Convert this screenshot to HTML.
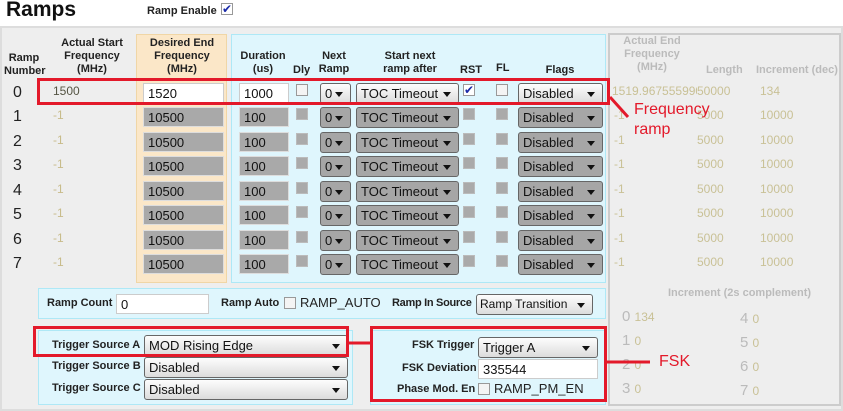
<!DOCTYPE html>
<html><head><meta charset="utf-8"><style>
*{box-sizing:border-box}
body{margin:0;width:843px;height:411px;background:#fff;font-family:"Liberation Sans",sans-serif;position:relative;overflow:hidden}
div,span{position:absolute}
.b{font-weight:bold;font-size:11px;color:#222;text-align:center;line-height:13px}
.in{height:20px;border:1px solid #ccc;background:#fff;font-size:13px;padding:2px 4px;line-height:15px;color:#111}
.g{background:#a9a9a9;border-color:#ddd}
.cb{width:12px;height:12px;border:1px solid #999;background:#f4f4f4}
.cbg{background:#aaa;border-color:#bbb}
.sel{height:21px;border:1px solid #666;border-radius:3px;background:linear-gradient(#fdfdfd,#dcdcdc);font-size:13px;padding:2px 4px;line-height:15px;color:#111;white-space:nowrap;overflow:hidden}
.sel.gs{background:#a6a6a6}
.sel:after{content:"";position:absolute;right:7px;top:8px;border-left:4px solid transparent;border-right:4px solid transparent;border-top:5px solid #111}
.n{font-size:16px;color:#222}
.m{font-size:12px;color:#c8bb8a}
.k{font-size:12px;color:#c9c196}
.red{border:3px solid #e3192a}
.rt{color:#e3192a;font-size:16px}
</style></head><body>
<div style="left:6px;top:-2px;font-size:21px;font-weight:bold;color:#111">Ramps</div>
<div class="b" style="left:147px;top:5px">Ramp Enable</div>
<div class="cb" style="left:221px;top:3px;background:#fff;color:#1a2aa8;font-size:12px;line-height:10px;text-align:center">✔</div>

<div style="left:0;top:26px;width:843px;height:385px;background:#eee;border:2px solid #ddd"></div>
<div style="left:608px;top:33px;width:233px;height:373px;border:2px solid #ccc;background:#eee"></div>
<div style="left:136px;top:34px;width:91px;height:249px;background:#fbe7c8;border:1px solid #f0d6a6"></div>
<div style="left:231px;top:34px;width:375px;height:249px;background:#dff6fd;border:1px solid #aee8f6"></div>

<div class="b" style="left:4px;top:52px;width:40px">Ramp<br>Number</div>
<div class="b" style="left:52px;top:37px;width:80px">Actual Start<br>Frequency<br>(MHz)</div>
<div class="b" style="left:138px;top:37px;width:88px">Desired End<br>Frequency<br>(MHz)</div>
<div class="b" style="left:237px;top:50px;width:52px">Duration<br>(us)</div>
<div class="b" style="left:293px;top:64px">Dly</div>
<div class="b" style="left:316px;top:50px;width:36px">Next<br>Ramp</div>
<div class="b" style="left:370px;top:50px;width:80px">Start next<br>ramp after</div>
<div class="b" style="left:460px;top:64px">RST</div>
<div class="b" style="left:496px;top:62px">FL</div>
<div class="b" style="left:540px;top:64px;width:40px">Flags</div>
<div class="b" style="left:614px;top:35px;width:76px;color:#bbb">Actual End<br>Frequency<br>(MHz)</div>
<div class="b" style="left:706px;top:64px;color:#bbb">Length</div>
<div class="b" style="left:756px;top:64px;color:#bbb">Increment (dec)</div>

<!-- row 0 -->
<div class="n" style="left:13px;top:84px">0</div><div class="m" style="left:53px;top:84px;color:#554">1500</div>
<div class="in" style="left:143px;top:83px;width:81px">1520</div>
<div class="in" style="left:239px;top:83px;width:50px">1000</div>
<div class="cb" style="left:296px;top:84px"></div>
<div class="sel" style="left:320px;top:83px;width:31px">0</div>
<div class="sel" style="left:356px;top:83px;width:103px">TOC Timeout</div>
<div class="cb" style="left:463px;top:84px;background:#fff;color:#1a2aa8;font-size:12px;line-height:10px;text-align:center">✔</div>
<div class="cb" style="left:496px;top:84px"></div>
<div class="sel" style="left:518px;top:83px;width:85px">Disabled</div>
<div class="k" style="left:612px;top:84px;width:85px;overflow:hidden;white-space:nowrap">1519.967555990</div>
<div class="k" style="left:697px;top:84px">50000</div><div class="k" style="left:760px;top:84px">134</div>

<!-- rows 1-7 -->
<div class="n" style="left:13px;top:108px">1</div><div class="m" style="left:53px;top:108px">-1</div><div class="in g" style="left:143px;top:107px;width:81px">10500</div><div class="in g" style="left:239px;top:107px;width:50px">100</div><div class="cb cbg" style="left:296px;top:108px"></div><div class="sel gs" style="left:320px;top:107px;width:31px">0</div><div class="sel gs" style="left:356px;top:107px;width:103px">TOC Timeout</div><div class="cb cbg" style="left:463px;top:108px"></div><div class="cb cbg" style="left:496px;top:108px"></div><div class="sel gs" style="left:518px;top:107px;width:85px">Disabled</div><div class="k" style="left:614px;top:108px">-1</div><div class="k" style="left:697px;top:108px">5000</div><div class="k" style="left:760px;top:108px">10000</div>
<div class="n" style="left:13px;top:133px">2</div><div class="m" style="left:53px;top:133px">-1</div><div class="in g" style="left:143px;top:132px;width:81px">10500</div><div class="in g" style="left:239px;top:132px;width:50px">100</div><div class="cb cbg" style="left:296px;top:133px"></div><div class="sel gs" style="left:320px;top:132px;width:31px">0</div><div class="sel gs" style="left:356px;top:132px;width:103px">TOC Timeout</div><div class="cb cbg" style="left:463px;top:133px"></div><div class="cb cbg" style="left:496px;top:133px"></div><div class="sel gs" style="left:518px;top:132px;width:85px">Disabled</div><div class="k" style="left:614px;top:133px">-1</div><div class="k" style="left:697px;top:133px">5000</div><div class="k" style="left:760px;top:133px">10000</div>
<div class="n" style="left:13px;top:157px">3</div><div class="m" style="left:53px;top:157px">-1</div><div class="in g" style="left:143px;top:156px;width:81px">10500</div><div class="in g" style="left:239px;top:156px;width:50px">100</div><div class="cb cbg" style="left:296px;top:157px"></div><div class="sel gs" style="left:320px;top:156px;width:31px">0</div><div class="sel gs" style="left:356px;top:156px;width:103px">TOC Timeout</div><div class="cb cbg" style="left:463px;top:157px"></div><div class="cb cbg" style="left:496px;top:157px"></div><div class="sel gs" style="left:518px;top:156px;width:85px">Disabled</div><div class="k" style="left:614px;top:157px">-1</div><div class="k" style="left:697px;top:157px">5000</div><div class="k" style="left:760px;top:157px">10000</div>
<div class="n" style="left:13px;top:182px">4</div><div class="m" style="left:53px;top:182px">-1</div><div class="in g" style="left:143px;top:181px;width:81px">10500</div><div class="in g" style="left:239px;top:181px;width:50px">100</div><div class="cb cbg" style="left:296px;top:182px"></div><div class="sel gs" style="left:320px;top:181px;width:31px">0</div><div class="sel gs" style="left:356px;top:181px;width:103px">TOC Timeout</div><div class="cb cbg" style="left:463px;top:182px"></div><div class="cb cbg" style="left:496px;top:182px"></div><div class="sel gs" style="left:518px;top:181px;width:85px">Disabled</div><div class="k" style="left:614px;top:182px">-1</div><div class="k" style="left:697px;top:182px">5000</div><div class="k" style="left:760px;top:182px">10000</div>
<div class="n" style="left:13px;top:206px">5</div><div class="m" style="left:53px;top:206px">-1</div><div class="in g" style="left:143px;top:205px;width:81px">10500</div><div class="in g" style="left:239px;top:205px;width:50px">100</div><div class="cb cbg" style="left:296px;top:206px"></div><div class="sel gs" style="left:320px;top:205px;width:31px">0</div><div class="sel gs" style="left:356px;top:205px;width:103px">TOC Timeout</div><div class="cb cbg" style="left:463px;top:206px"></div><div class="cb cbg" style="left:496px;top:206px"></div><div class="sel gs" style="left:518px;top:205px;width:85px">Disabled</div><div class="k" style="left:614px;top:206px">-1</div><div class="k" style="left:697px;top:206px">5000</div><div class="k" style="left:760px;top:206px">10000</div>
<div class="n" style="left:13px;top:231px">6</div><div class="m" style="left:53px;top:231px">-1</div><div class="in g" style="left:143px;top:230px;width:81px">10500</div><div class="in g" style="left:239px;top:230px;width:50px">100</div><div class="cb cbg" style="left:296px;top:231px"></div><div class="sel gs" style="left:320px;top:230px;width:31px">0</div><div class="sel gs" style="left:356px;top:230px;width:103px">TOC Timeout</div><div class="cb cbg" style="left:463px;top:231px"></div><div class="cb cbg" style="left:496px;top:231px"></div><div class="sel gs" style="left:518px;top:230px;width:85px">Disabled</div><div class="k" style="left:614px;top:231px">-1</div><div class="k" style="left:697px;top:231px">5000</div><div class="k" style="left:760px;top:231px">10000</div>
<div class="n" style="left:13px;top:255px">7</div><div class="m" style="left:53px;top:255px">-1</div><div class="in g" style="left:143px;top:254px;width:81px">10500</div><div class="in g" style="left:239px;top:254px;width:50px">100</div><div class="cb cbg" style="left:296px;top:255px"></div><div class="sel gs" style="left:320px;top:254px;width:31px">0</div><div class="sel gs" style="left:356px;top:254px;width:103px">TOC Timeout</div><div class="cb cbg" style="left:463px;top:255px"></div><div class="cb cbg" style="left:496px;top:255px"></div><div class="sel gs" style="left:518px;top:254px;width:85px">Disabled</div><div class="k" style="left:614px;top:255px">-1</div><div class="k" style="left:697px;top:255px">5000</div><div class="k" style="left:760px;top:255px">10000</div>

<!-- ramp count panel -->
<div style="left:38px;top:288px;width:568px;height:31px;background:#dff6fd;border:1px solid #aee8f6"></div>
<div class="b" style="left:47px;top:297px">Ramp Count</div>
<div class="in" style="left:116px;top:294px;width:93px">0</div>
<div class="b" style="left:221px;top:297px">Ramp Auto</div>
<div class="cb" style="left:284px;top:297px"></div>
<div style="left:300px;top:295px;font-size:13px;color:#222">RAMP_AUTO</div>
<div class="b" style="left:392px;top:297px;letter-spacing:-0.3px">Ramp In Source</div>
<div class="sel" style="left:476px;top:294px;width:117px;font-size:12px;padding-left:3px">Ramp Transition</div>

<!-- trigger panel -->
<div style="left:38px;top:330px;width:315px;height:75px;background:#dff6fd;border:1px solid #aee8f6"></div>
<div class="b" style="left:52px;top:339px">Trigger Source A</div>
<div class="b" style="left:52px;top:360px">Trigger Source B</div>
<div class="b" style="left:52px;top:382px">Trigger Source C</div>
<div class="sel" style="left:144px;top:335px;width:204px">MOD Rising Edge</div>
<div class="sel" style="left:144px;top:357px;width:204px">Disabled</div>
<div class="sel" style="left:144px;top:379px;width:204px">Disabled</div>

<!-- FSK panel -->
<div style="left:370px;top:330px;width:236px;height:75px;background:#dff6fd;border:1px solid #aee8f6"></div>
<div class="b" style="left:412px;top:339px">FSK Trigger</div>
<div class="b" style="left:402px;top:362px">FSK Deviation</div>
<div class="b" style="left:397px;top:383px">Phase Mod. En</div>
<div class="sel" style="left:478px;top:337px;width:120px">Trigger A</div>
<div class="in" style="left:478px;top:359px;width:120px">335544</div>
<div class="cb" style="left:478px;top:383px"></div>
<div style="left:494px;top:381px;font-size:13px;color:#222">RAMP_PM_EN</div>

<!-- increment 2s complement -->
<div class="b" style="left:668px;top:287px;color:#bbb;font-weight:bold">Increment (2s complement)</div>
<div style="left:622px;top:308px;font-size:15px;color:#bbb">0 <span style="position:static;font-size:12px;color:#c9c196">134</span></div>
<div style="left:622px;top:332px;font-size:15px;color:#bbb">1 <span style="position:static;font-size:12px;color:#c9c196">0</span></div>
<div style="left:622px;top:356px;font-size:15px;color:#bbb">2 <span style="position:static;font-size:12px;color:#c9c196">0</span></div>
<div style="left:622px;top:380px;font-size:15px;color:#bbb">3 <span style="position:static;font-size:12px;color:#c9c196">0</span></div>
<div style="left:740px;top:310px;font-size:15px;color:#bbb">4 <span style="position:static;font-size:12px;color:#c9c196">0</span></div>
<div style="left:740px;top:334px;font-size:15px;color:#bbb">5 <span style="position:static;font-size:12px;color:#c9c196">0</span></div>
<div style="left:740px;top:358px;font-size:15px;color:#bbb">6 <span style="position:static;font-size:12px;color:#c9c196">0</span></div>
<div style="left:740px;top:382px;font-size:15px;color:#bbb">7 <span style="position:static;font-size:12px;color:#c9c196">0</span></div>

<!-- annotations -->
<div class="red" style="left:37px;top:78px;width:573px;height:27px"></div>
<svg style="position:absolute;left:0;top:0" width="843" height="411"><line x1="610" y1="97" x2="628" y2="117" stroke="#e3192a" stroke-width="3"/><line x1="348" y1="343" x2="372" y2="343" stroke="#e3192a" stroke-width="3"/><line x1="606" y1="362" x2="650" y2="362" stroke="#e3192a" stroke-width="3"/></svg>
<div class="rt" style="left:634px;top:100px;line-height:20px">Frequency<br>ramp</div>
<div class="red" style="left:33px;top:326px;width:316px;height:31px"></div>
<div class="red" style="left:370px;top:326px;width:237px;height:76px"></div>
<div class="rt" style="left:659px;top:353px">FSK</div>
</body></html>
